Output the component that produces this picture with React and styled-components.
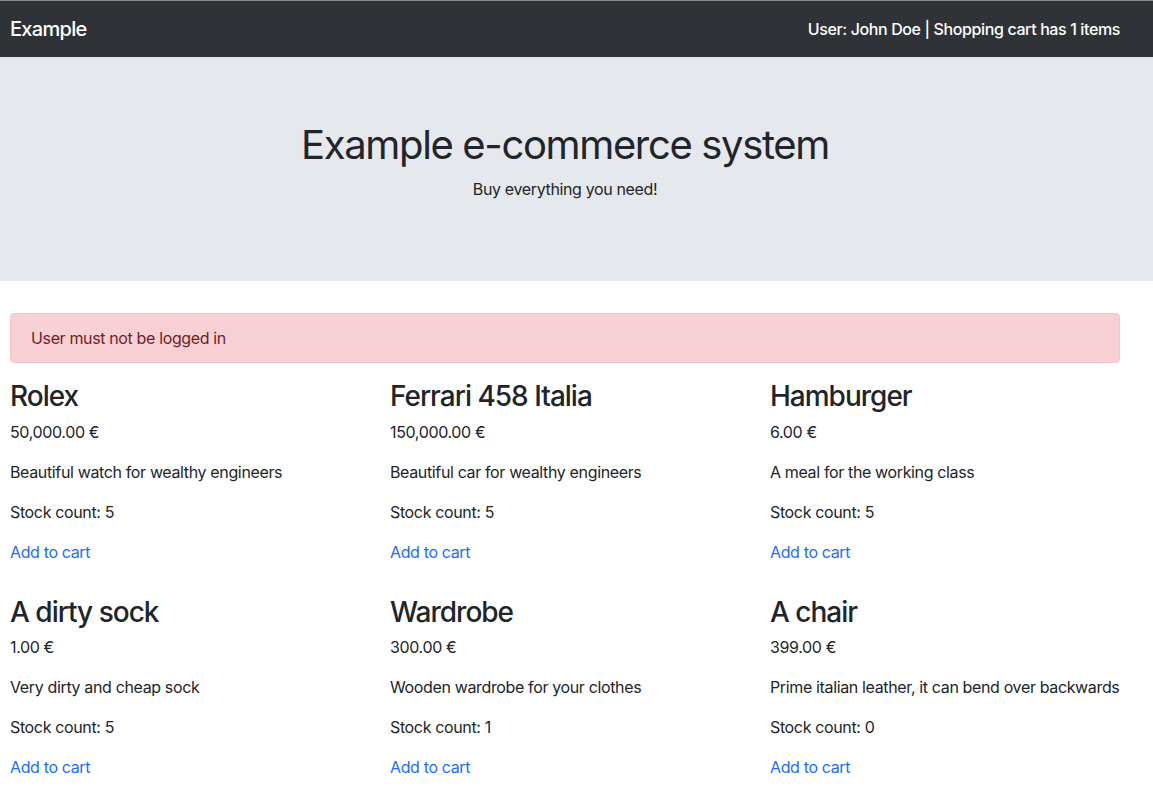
import React from "react";
import styled, { createGlobalStyle } from "styled-components";

const GlobalStyle = createGlobalStyle`
  * { box-sizing: border-box; }
  body {
    margin: 0;
    font-family: Inter, "Noto Sans", sans-serif;
    font-size: 16px;
    line-height: 1.5;
    letter-spacing: -0.36px;
    color: #212529;
    background: #fff;
  }
`;

const Navbar = styled.nav`
  display: flex;
  align-items: center;
  justify-content: space-between;
  height: 57px;
  padding: 0 33px 0 10px;
  background-color: #2f3337;
  border-top: 1px solid #8c8c8c;
  color: #fff;
`;

const Brand = styled.a`
  font-size: 20px;
  font-weight: 500;
  line-height: 30px;
  letter-spacing: -0.7px;
  color: #fff;
  text-decoration: none;
`;

const NavText = styled.span`
  font-size: 16px;
  font-weight: 500;
  letter-spacing: -0.38px;
  color: #fff;
`;

const Jumbotron = styled.header`
  display: flex;
  flex-direction: column;
  align-items: center;
  padding: 64px 33px 64px 10px;
  margin-bottom: 32px;
  background-color: #e5e8ec;
  text-align: center;
`;

const Title = styled.h1`
  margin: 0 0 8px;
  font-size: 40px;
  font-weight: 400;
  line-height: 48px;
  letter-spacing: -1.35px;
`;

const Lead = styled.p`
  margin: 0 0 16px;
`;

const Main = styled.main`
  width: 1110px;
  margin-left: 10px;
`;

const Alert = styled.div`
  padding: 12px 20px;
  margin-bottom: 16px;
  border: 1px solid #f4c4cb;
  border-radius: 4px;
  background-color: #f7d0d5;
  color: #721c24;
`;

const Grid = styled.div`
  display: grid;
  grid-template-columns: repeat(3, 1fr);
  column-gap: 30px;
  row-gap: 15px;
`;

const Card = styled.article`
  display: flex;
  flex-direction: column;
`;

const Name = styled.h3`
  margin: 1px 0 6px;
  font-size: 28px;
  font-weight: 500;
  line-height: 33.6px;
  letter-spacing: -1px;
`;

const Line = styled.p`
  margin: 0 0 16px;
  white-space: nowrap;
`;

const CartLink = styled.a`
  color: #1a6dff;
  text-decoration: none;
  cursor: pointer;
`;

const products = [
  { name: "Rolex", price: "50,000.00 €", desc: "Beautiful watch for wealthy engineers", stock: 5 },
  { name: "Ferrari 458 Italia", price: "150,000.00 €", desc: "Beautiful car for wealthy engineers", stock: 5 },
  { name: "Hamburger", price: "6.00 €", desc: "A meal for the working class", stock: 5 },
  { name: "A dirty sock", price: "1.00 €", desc: "Very dirty and cheap sock", stock: 5 },
  { name: "Wardrobe", price: "300.00 €", desc: "Wooden wardrobe for your clothes", stock: 1 },
  { name: "A chair", price: "399.00 €", desc: "Prime italian leather, it can bend over backwards", stock: 0 },
];

export default function App() {
  return (
    <>
      <GlobalStyle />
      <Navbar>
        <Brand href="#">Example</Brand>
        <NavText>User: John Doe | Shopping cart has 1 items</NavText>
      </Navbar>
      <Jumbotron>
        <Title>Example e-commerce system</Title>
        <Lead>Buy everything you need!</Lead>
      </Jumbotron>
      <Main>
        <Alert>User must not be logged in</Alert>
        <Grid>
          {products.map((p) => (
            <Card key={p.name}>
              <Name>{p.name}</Name>
              <Line>{p.price}</Line>
              <Line>{p.desc}</Line>
              <Line>Stock count: {p.stock}</Line>
              <Line>
                <CartLink>Add to cart</CartLink>
              </Line>
            </Card>
          ))}
        </Grid>
      </Main>
    </>
  );
}
